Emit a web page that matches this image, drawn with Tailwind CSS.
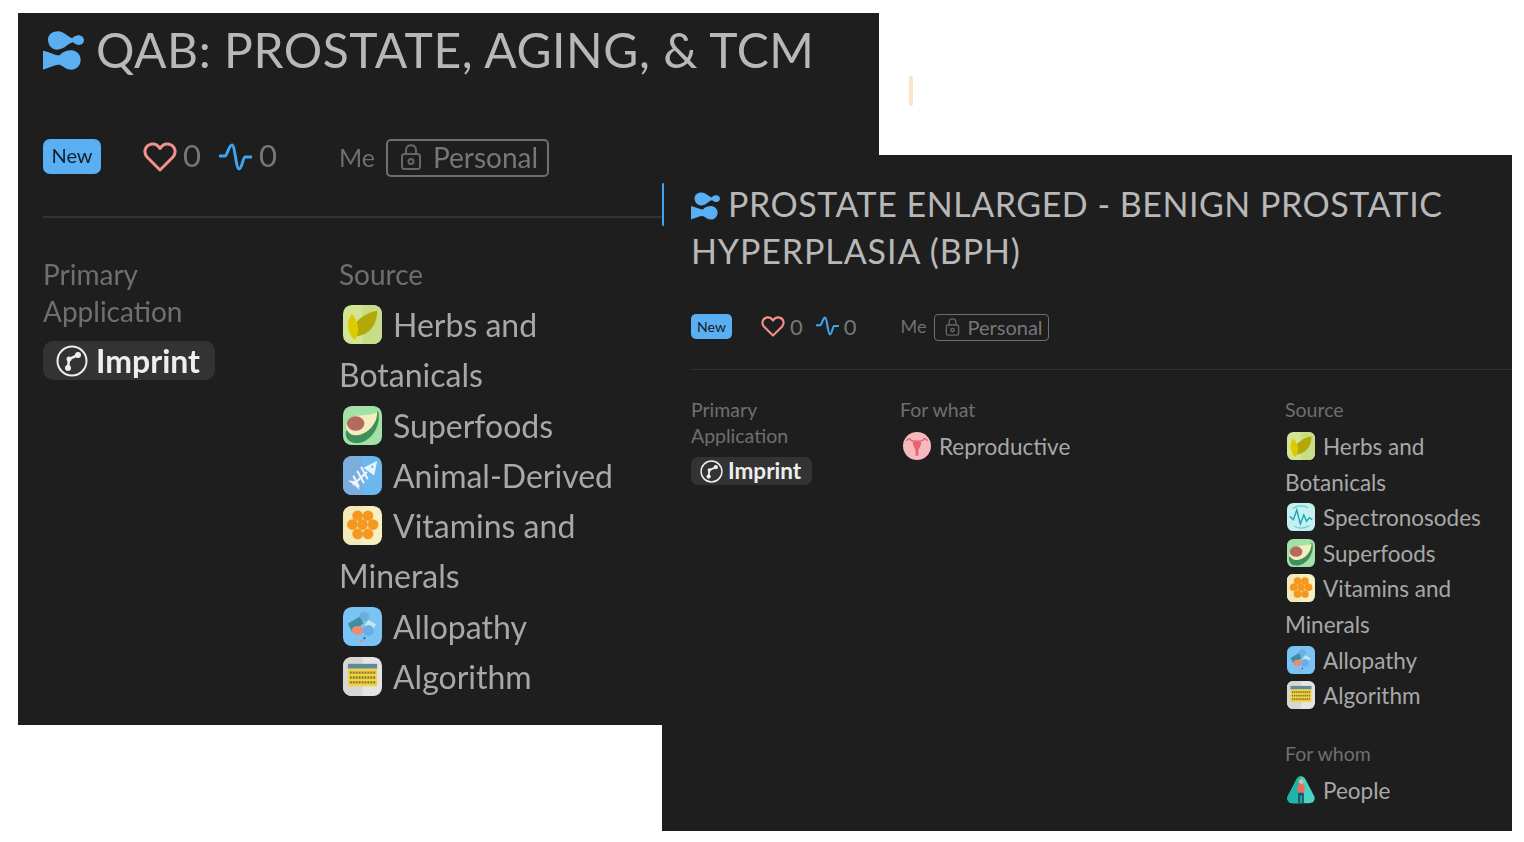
<!doctype html>
<html><head><meta charset="utf-8"><script src="https://cdn.jsdelivr.net/npm/@tailwindcss/browser@4"></script></head>
<body class="bg-white">
<svg width="0" height="0" class="absolute">
<defs>
<symbol id="logo" viewBox="0 0 123 115"><path fill="#5aaef2" d="M15 25C15 8 30 0 45 0C62 0 72 15 88 21C93 14 100 12 107 12C116 12 123 19 123 27C123 35 116 41 108 41C100 41 95 37 90 33C75 35 65 55 42 55C28 55 15 42 15 25Z"/><path fill="#5aaef2" d="M0 58C20 62 35 72 50 72C60 60 75 57 85 57C100 57 113 70 113 85C113 102 100 115 85 115C70 115 62 105 50 100C35 100 20 108 0 115Z"/></symbol>
<symbol id="heart" viewBox="0 0 34 30"><path fill="none" stroke="#f0928a" stroke-width="3" stroke-linejoin="round" d="M17 28L4 15C0 10 2 3 9 2C13 1.500 15.500 4 17 6.500C18.500 4 21 1.500 25 2C32 3 34 10 30 15Z"/></symbol>
<symbol id="pulse" viewBox="0 0 33 28"><path fill="none" stroke="#3ea6f0" stroke-width="3" stroke-linecap="round" stroke-linejoin="round" d="M1 13H6C8 13 10 2 13 2C16 2 17 26 20 26C23 26 24 14 26 14H32"/></symbol>
<symbol id="lock" viewBox="0 0 22 28"><g fill="none" stroke="#666" stroke-width="2"><rect x="2" y="11" width="18" height="15" rx="2.500"/><path d="M6 11V7C6 0.500 16 0.500 16 7V11"/><circle cx="11" cy="18.500" r="2.500"/></g></symbol>
<symbol id="imprint" viewBox="0 0 32 32"><circle cx="16" cy="16" r="14.500" fill="none" stroke="#eee" stroke-width="2"/><path d="M12 23L13 14L22 10" fill="none" stroke="#eee" stroke-width="2.500"/><circle cx="12" cy="23" r="3" fill="#eee"/><circle cx="13" cy="14" r="2.500" fill="#eee"/><circle cx="22" cy="10" r="3" fill="#eee"/></symbol>
<symbol id="herbs" viewBox="0 0 40 40"><rect width="40" height="40" rx="9" fill="#d3e592"/><path d="M20 0H31C36 0 40 4 40 9V31C40 36 36 40 31 40H20Z" fill="#c9dc88"/><path d="M9 33C9 18 20 9 35 6C35 22 26 32 9 33Z" fill="#b2a80a"/><path d="M9 9C3 17 4 29 12 36C18 28 16 17 9 9Z" fill="#dccb00"/></symbol>
<symbol id="avocado" viewBox="0 0 40 40"><rect width="40" height="40" rx="9" fill="#a3e2a6"/><path d="M36 5C40 20 28 39 12 38C5 37 2 32 3 26Z" fill="#3f8f5b"/><path d="M35 6C36 18 24 31 12 30C4 29 1 21 6 14C12 7 26 12 35 6Z" fill="#f2eec0"/><ellipse cx="13" cy="18" rx="9" ry="7.500" fill="#b66a5f"/></symbol>
<symbol id="fish" viewBox="0 0 40 40"><rect width="40" height="40" rx="9" fill="#6db7ef"/><path d="M0 9C0 4 4 0 9 0H20V40H9C4 40 0 36 0 31Z" fill="#7badde"/><path d="M21 12L35 5L32 20Z" fill="#eaf5fc"/><path d="M24 17L11 29M19 12L25 23M15 16L21 27M11 21L16 31" stroke="#eaf5fc" stroke-width="2.200" fill="none" stroke-linecap="round"/><path d="M5 25L14 26L17 35L12 30Z" fill="#eaf5fc"/><circle cx="30" cy="11" r="1.300" fill="#6db7ef"/></symbol>
<symbol id="vitamins" viewBox="0 0 40 40"><rect width="40" height="40" rx="9" fill="#f6efc2"/><path d="M0 9C0 4 4 0 9 0H20V40H9C4 40 0 36 0 31Z" fill="#f1eab8"/><g fill="#f6981f"><circle cx="15" cy="10" r="5.500"/><circle cx="25.600" cy="10" r="5.500"/><circle cx="9.600" cy="19" r="5.500"/><circle cx="20" cy="19" r="5.500"/><circle cx="30.800" cy="19" r="5.500"/><circle cx="15" cy="28.700" r="5.500"/><circle cx="25.600" cy="28.700" r="5.500"/></g></symbol>
<symbol id="allopathy" viewBox="0 0 40 40"><rect width="40" height="40" rx="9" fill="#79c3f5"/><circle cx="22" cy="10" r="5" fill="#6facdf"/><path d="M5 17L17 10L21 17L9 25Z" fill="#3f8f9c"/><path d="M26 13L34 18L30 23L22 19Z" fill="#c3e8ea"/><ellipse cx="15" cy="24" rx="6" ry="4.500" fill="#ee8a72"/><circle cx="26" cy="24" r="5.500" fill="#6aaee6"/><circle cx="19" cy="35" r="1.500" fill="#ee8a72"/><circle cx="22" cy="32" r="1" fill="#345"/></symbol>
<symbol id="algorithm" viewBox="0 0 40 40"><rect width="40" height="40" rx="9" fill="#e4e4e4"/><path d="M0 9C0 4 4 0 9 0H20V40H9C4 40 0 36 0 31Z" fill="#d6d6d6"/><rect x="5" y="7" width="30" height="5" fill="#5f8a96"/><rect x="5" y="12" width="30" height="18" fill="#efd24a"/><path d="M7 16H33M7 21H33M7 26H33" stroke="#8a7a20" stroke-width="2.500" stroke-dasharray="2 1"/></symbol>
<symbol id="spectro" viewBox="0 0 40 40"><rect width="40" height="40" rx="9" fill="#c6eff1"/><path d="M4 19L9 24L14 10L19 30L24 17L28 26L32 21L36 24" fill="none" stroke="#17a8b8" stroke-width="2"/><path d="M8 8C14 3 24 3 30 7M32 32C26 37 16 37 10 33" fill="none" stroke="#5ccfd6" stroke-width="1.500"/></symbol>
<symbol id="repro" viewBox="0 0 40 40"><circle cx="20" cy="20" r="20" fill="#f6b9bd"/><path d="M10 11C14 14 26 14 30 11M5 13C6 9 10 9 11 11M35 13C34 9 30 9 29 11" fill="none" stroke="#e8636f" stroke-width="2"/><path d="M14 14C14 21 18 24 18 27V34H22V27C22 24 26 21 26 14Z" fill="#e8636f"/></symbol>
<symbol id="people" viewBox="0 0 40 40"><path d="M14 4C17 -1 23 -1 26 4L38 27C42 33 38 39 32 39H8C2 39 -2 33 2 27Z" fill="#48d3c4"/><path d="M14 4C16 0 20 0 20 0V39H8C2 39 -2 33 2 27Z" fill="#1cb5ab"/><circle cx="20" cy="8" r="3.500" fill="#f2b08c"/><rect x="15" y="12" width="10" height="12" rx="1.500" fill="#f0695c"/><path d="M16 24H24V39H21V28H19V39H16Z" fill="#1d4f66"/></symbol>
</defs>
</svg>
<div class="relative h-[842px] w-[1524px] overflow-hidden bg-white font-['Lato',sans-serif]">

<section class="absolute left-[18px] top-[13px] flex h-[712px] w-[861px] flex-col bg-[#1e1e1e] px-[25px] blur-[0.4px]">
  <h1 class="mt-[13px] flex items-center gap-[12px] text-[48px] leading-[48px] font-normal tracking-[0.55px] whitespace-nowrap text-[#b8b8b8]"><svg class="h-[39px] w-[41px] shrink-0"><use href="#logo"/></svg>QAB: PROSTATE, AGING, &amp; TCM</h1>
  <div class="mt-[65px] flex h-[35px] items-center">
    <span class="flex h-[35px] w-[58px] items-center justify-center rounded-[7px] bg-[#5aaef2] pb-[3px] text-[20px] text-[#10202c]">New</span>
    <svg class="ml-[42px] h-[30px] w-[34px]"><use href="#heart"/></svg><span class="mb-[2px] ml-[6px] text-[31px] text-[#777]">0</span>
    <svg class="ml-[18px] h-[28px] w-[33px]"><use href="#pulse"/></svg><span class="mb-[2px] ml-[7px] text-[31px] text-[#777]">0</span>
    <span class="mt-[3px] ml-[62px] text-[25px] text-[#6f6f6f]">Me</span>
    <span class="ml-[11px] flex h-[38px] w-[163px] items-center gap-[11px] self-start rounded-[5px] border-2 border-[#6f6f6f] pb-[2px] pl-[12px] text-[28px] text-[#777]"><svg class="h-[28px] w-[22px]"><use href="#lock"/></svg>Personal</span>
  </div>
  <div class="mt-[42px] h-[2px] w-full bg-[#333]"></div>
  <div class="mt-[38px] grid grid-cols-[296px_320px]">
    <div>
      <p class="text-[28px] leading-[37px] text-[#6f6f6f]">Primary<br>Application</p>
      <span class="mt-[11px] inline-flex h-[39px] w-[172px] items-center gap-[8px] rounded-[10px] bg-[#333] pl-[13px] text-[32px] font-bold text-[#eee]"><svg class="h-[32px] w-[32px]"><use href="#imprint"/></svg>Imprint</span>
    </div>
    <div class="text-[32px] leading-[50.3px] text-[#a8a8a8]">
      <p class="text-[28px] leading-[37px] text-[#6f6f6f]">Source</p>
      <div class="mt-[7px]">
        <p class="max-w-[270px]"><svg class="mr-[11px] ml-[4px] inline-block h-[39px] w-[39px] align-[-7px]"><use href="#herbs"/></svg>Herbs and Botanicals</p>
        <p><svg class="mr-[11px] ml-[4px] inline-block h-[39px] w-[39px] align-[-7px]"><use href="#avocado"/></svg>Superfoods</p>
        <p><svg class="mr-[11px] ml-[4px] inline-block h-[39px] w-[39px] align-[-7px]"><use href="#fish"/></svg>Animal-Derived</p>
        <p class="max-w-[270px]"><svg class="mr-[11px] ml-[4px] inline-block h-[39px] w-[39px] align-[-7px]"><use href="#vitamins"/></svg>Vitamins and Minerals</p>
        <p><svg class="mr-[11px] ml-[4px] inline-block h-[39px] w-[39px] align-[-7px]"><use href="#allopathy"/></svg>Allopathy</p>
        <p><svg class="mr-[11px] ml-[4px] inline-block h-[39px] w-[39px] align-[-7px]"><use href="#algorithm"/></svg>Algorithm</p>
      </div>
    </div>
  </div>
</section>

<div class="absolute left-[909px] top-[76px] h-[30px] w-[4px] rounded-full bg-[#fde3c8]"></div>

<section class="absolute left-[662px] top-[155px] flex h-[676px] w-[850px] flex-col bg-[#1e1e1e] pl-[29px]">
  <h2 class="mt-[25px] pr-[40px] text-[34px] leading-[47px] font-normal tracking-[0.52px] text-[#b8b8b8]"><svg class="mr-[8px] inline-block h-[28px] w-[29px] align-[-3px]"><use href="#logo"/></svg>PROSTATE ENLARGED - BENIGN PROSTATIC <span class="tracking-[0.9px]">HYPERPLASIA (BPH)</span></h2>
  <div class="mt-[39px] flex h-[26px] items-center">
    <span class="flex h-[25px] w-[41px] items-center justify-center rounded-[5px] bg-[#5aaef2] text-[14px] text-[#10202c]">New</span>
    <svg class="ml-[29px] h-[21px] w-[24px]"><use href="#heart"/></svg><span class="ml-[5px] text-[22px] text-[#777]">0</span>
    <svg class="ml-[13px] h-[20px] w-[23px]"><use href="#pulse"/></svg><span class="ml-[5px] text-[22px] text-[#777]">0</span>
    <span class="ml-[44px] text-[18px] text-[#6f6f6f]">Me</span>
    <span class="mt-[2px] ml-[8px] flex h-[27px] w-[115px] items-center gap-[7px] rounded-[4px] border border-[#6f6f6f] pb-px pl-[10px] text-[20px] text-[#777]"><svg class="h-[20px] w-[15px]"><use href="#lock"/></svg>Personal</span>
  </div>
  <div class="mt-[30px] h-px w-full bg-[#333]"></div>
  <div class="mt-[27px] grid grid-cols-[209px_385px_1fr]">
    <div>
      <p class="text-[19.500px] leading-[26px] text-[#6f6f6f]">Primary<br>Application</p>
      <span class="mt-[8px] inline-flex h-[28px] w-[121px] items-center gap-[5px] rounded-[7px] bg-[#333] pl-[9px] text-[22.500px] font-bold text-[#eee]"><svg class="h-[23px] w-[23px]"><use href="#imprint"/></svg>Imprint</span>
    </div>
    <div class="text-[22.500px] leading-[35.6px] text-[#a8a8a8]">
      <p class="text-[19.500px] leading-[26px] text-[#6f6f6f]">For what</p>
      <p class="mt-[6px]"><svg class="mr-[8px] ml-[3px] inline-block h-[28px] w-[28px] align-[-5px]"><use href="#repro"/></svg>Reproductive</p>
    </div>
    <div class="text-[22.500px] leading-[35.6px] text-[#a8a8a8]">
      <p class="text-[19.500px] leading-[26px] text-[#6f6f6f]">Source</p>
      <div class="mt-[6px]">
        <p class="max-w-[190px]"><svg class="mr-[8px] ml-[2px] inline-block h-[28px] w-[28px] align-[-5px]"><use href="#herbs"/></svg>Herbs and Botanicals</p>
        <p><svg class="mr-[8px] ml-[2px] inline-block h-[28px] w-[28px] align-[-5px]"><use href="#spectro"/></svg>Spectronosodes</p>
        <p><svg class="mr-[8px] ml-[2px] inline-block h-[28px] w-[28px] align-[-5px]"><use href="#avocado"/></svg>Superfoods</p>
        <p class="max-w-[190px]"><svg class="mr-[8px] ml-[2px] inline-block h-[28px] w-[28px] align-[-5px]"><use href="#vitamins"/></svg>Vitamins and Minerals</p>
        <p><svg class="mr-[8px] ml-[2px] inline-block h-[28px] w-[28px] align-[-5px]"><use href="#allopathy"/></svg>Allopathy</p>
        <p><svg class="mr-[8px] ml-[2px] inline-block h-[28px] w-[28px] align-[-5px]"><use href="#algorithm"/></svg>Algorithm</p>
      </div>
      <p class="mt-[27px] text-[19.500px] leading-[26px] text-[#6f6f6f]">For whom</p>
      <p class="mt-[6px]"><svg class="mr-[8px] ml-[2px] inline-block h-[28px] w-[28px] align-[-5px]"><use href="#people"/></svg>People</p>
    </div>
  </div>
  <div class="absolute top-[28px] left-0 h-[43px] w-[1.5px] rounded-full bg-[#3ea6f0]"></div>
</section>
</div>
</body></html>
